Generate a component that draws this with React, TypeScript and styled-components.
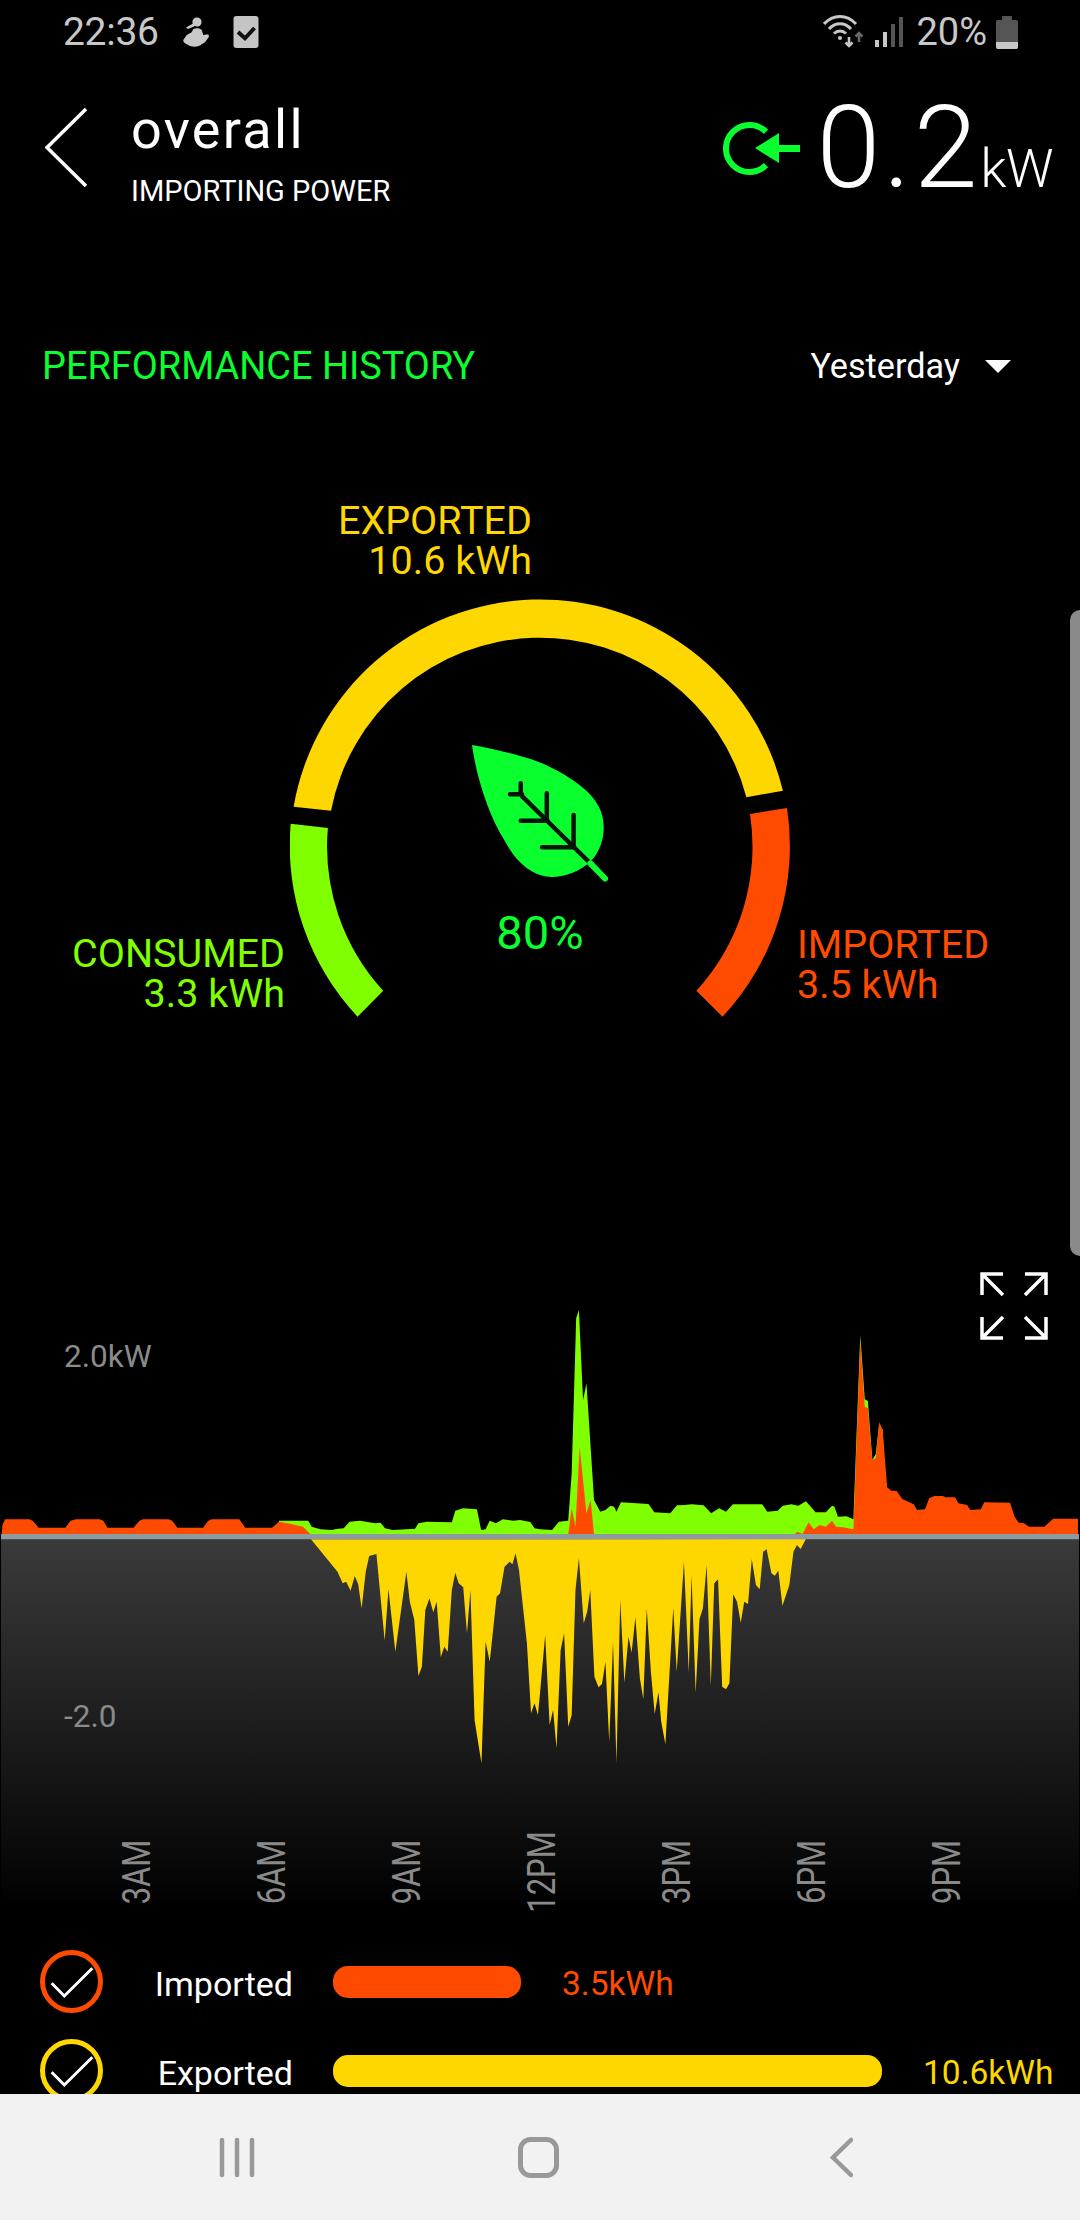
import styled, { createGlobalStyle } from "styled-components";

const Colors = {
  leaf: "#0aff2f",
  consumed: "#80ff00",
  imported: "#ff4b00",
  exported: "#ffd700",
  axis: "#8a8a8a",
  status: "#c8c8c8",
};

const GlobalStyle = createGlobalStyle`
  html, body {
    margin: 0;
    background: #000;
    font-family: Roboto, "Liberation Sans", sans-serif;
  }
`;

const Screen = styled.div`
  position: relative;
  width: 1080px;
  height: 2220px;
  background: #000;
  display: flex;
  flex-direction: column;
  overflow: hidden;
`;

const Main = styled.main`
  flex: 1;
  min-height: 0;
  overflow: hidden;
`;

const StatusBar = styled.div`
  height: 64px;
  padding: 0 62px 0 63px;
  display: flex;
  align-items: center;
  justify-content: space-between;
  color: ${Colors.status};
  box-sizing: border-box;
`;

const StatusGroup = styled.div`
  display: flex;
  align-items: center;
`;

const Clock = styled.span`
  font-size: 39px;
  letter-spacing: -0.3px;
  margin-right: 24px;
`;

const Percent = styled.span`
  font-size: 38px;
  margin: 0 9px 0 13px;
`;

const Header = styled.header`
  height: 140px;
  padding: 38px 27px 0 45px;
  box-sizing: border-box;
  display: flex;
  justify-content: space-between;
  align-items: flex-start;
  color: #fff;
`;

const TitleGroup = styled.div`
  display: flex;
  align-items: flex-start;
  gap: 44px;
`;

const BackIcon = styled.svg`
  margin-top: 6px;
`;

const TitleText = styled.div`
  display: flex;
  flex-direction: column;
`;

const Title = styled.h1`
  margin: -1px 0 0;
  font-size: 54px;
  line-height: 58px;
  font-weight: 400;
  letter-spacing: 2.3px;
`;

const Subtitle = styled.div`
  margin-top: 15px;
  font-size: 29px;
  line-height: 34px;
`;

const Reading = styled.div`
  display: flex;
  align-items: flex-start;
  margin-top: -12px;
`;

const ReadingIcon = styled.svg`
  margin: 32px 16px 0 0;
`;

const ReadingValue = styled.span`
  font-size: 115px;
  line-height: 115px;
  font-weight: 300;
  letter-spacing: 3px;
`;

const ReadingUnit = styled.span`
  font-size: 53px;
  font-weight: 300;
  line-height: 60px;
  letter-spacing: -0.5px;
  margin-top: 49px;
`;

const HistoryBar = styled.div`
  margin-top: 137px;
  height: 50px;
  padding: 0 69px 0 42px;
  display: flex;
  align-items: center;
  justify-content: space-between;
`;

const HistoryTitle = styled.h2`
  margin: 0;
  color: ${Colors.leaf};
  font-size: 37.9px;
  font-weight: 400;
`;

const RangeSelect = styled.div`
  display: flex;
  align-items: center;
  gap: 25px;
  color: #fff;
  font-size: 34.2px;
`;

const Caret = styled.i`
  width: 0;
  height: 0;
  border-left: 13px solid transparent;
  border-right: 13px solid transparent;
  border-top: 13px solid #fff;
`;

const GaugeGrid = styled.section`
  margin-top: 110px;
  display: grid;
  grid-template-columns: 290px 500px 290px;
  grid-template-rows: 96px 424px;
`;

const GaugeLabel = styled.div<{ $color: string; $align: "left" | "right" }>`
  color: ${(p) => p.$color};
  font-size: 39.5px;
  line-height: 39.5px;
  white-space: nowrap;
  text-align: ${(p) => p.$align};
`;

const ExportedLabel = styled(GaugeLabel)`
  grid-column: 2;
  grid-row: 1;
  width: 242px;
`;

const ConsumedLabel = styled(GaugeLabel)`
  grid-column: 1;
  grid-row: 2;
  margin-top: 337px;
  padding-right: 5px;
`;

const ImportedLabel = styled(GaugeLabel)`
  grid-column: 3;
  grid-row: 2;
  margin-top: 328px;
  padding-left: 7px;
`;

const GaugeDial = styled.div`
  grid-column: 2;
  grid-row: 2;
  position: relative;
`;

const DialSvg = styled.svg`
  display: block;
`;

const DialCenter = styled.div`
  position: absolute;
  left: 0;
  right: 0;
  top: 148px;
  display: flex;
  flex-direction: column;
  align-items: center;
`;

const Score = styled.div`
  margin-top: 23px;
  color: ${Colors.leaf};
  font-size: 47px;
  line-height: 54px;
`;

const Chart = styled.section`
  position: relative;
  margin-top: 251px;
  height: 665px;
`;

const PlotSvg = styled.svg`
  display: block;
`;

const YLabel = styled.span<{ $top: number }>`
  position: absolute;
  left: 64px;
  top: ${(p) => p.$top}px;
  color: ${Colors.axis};
  font-size: 31.5px;
  line-height: 30px;
`;

const ExpandIcon = styled.svg`
  position: absolute;
  top: 0;
  right: 32px;
`;

const TimeAxis = styled.div`
  position: absolute;
  left: 69px;
  top: 560px;
  display: grid;
  grid-template-columns: repeat(7, 135px);
  height: 80px;
`;

const TimeTick = styled.span`
  display: flex;
  align-items: center;
  justify-content: center;
  color: ${Colors.axis};
  font-size: 31px;
  white-space: nowrap;
  transform: rotate(-90deg) scaleY(1.25);
`;

const LegendRow = styled.div`
  height: 89px;
  padding-left: 40px;
  display: flex;
  align-items: center;
`;

const LegendLabel = styled.span`
  width: 190px;
  margin-right: 40px;
  padding-top: 4px;
  text-align: right;
  color: #fff;
  font-size: 34px;
`;

const LegendBar = styled.div<{ $color: string }>`
  height: 32px;
  border-radius: 15px;
  background: ${(p) => p.$color};
`;

const LegendValue = styled.span<{ $color: string }>`
  margin-left: 41px;
  padding-top: 4px;
  color: ${(p) => p.$color};
  font-size: 33.5px;
`;

const Scrollbar = styled.div`
  position: absolute;
  right: 0;
  top: 610px;
  width: 10px;
  height: 646px;
  background: #8a8a8a;
  border-radius: 10px 0 0 10px;
`;

const NavBar = styled.nav`
  height: 126px;
  flex-shrink: 0;
  background: #f2f2f2;
  display: flex;
  align-items: center;
  gap: 263px;
  padding-left: 219px;
`;

const NavBack = styled.svg`
  margin-left: 8px;
`;

type Pt = [number, number];

// traced in chart units: 2.904 per px across, 3 per px down, y=764 is the zero line
const greenTop: Pt[] = [
  [810, 764], [810, 722], [895, 722], [905, 740], [930, 748], [965, 750], [975, 747], [998, 745], [1015, 725], [1045, 722],
  [1090, 730], [1105, 728], [1118, 745], [1140, 750], [1205, 746], [1215, 730], [1240, 725], [1312, 727], [1322, 692],
  [1345, 685], [1385, 688], [1397, 750], [1410, 748], [1422, 722], [1440, 730], [1460, 718], [1490, 722], [1510, 720],
  [1540, 726], [1552, 745],
];

// right half of the day, y measured 60 units lower and x from mid screen
const greenTopRight: Pt[] = [
  [0, 808], [35, 810], [55, 785], [82, 782], [92, 640], [105, 175], [113, 150], [125, 420], [135, 370], [157, 720], [175, 755],
  [190, 750], [205, 737], [215, 740], [222, 755], [235, 727], [315, 732], [332, 757], [378, 760], [398, 736], [420, 735],
  [440, 733], [475, 736], [497, 760], [520, 745], [540, 755], [560, 733], [645, 733], [660, 755], [690, 752], [705, 737],
  [730, 733], [750, 737], [772, 724], [782, 735], [800, 757], [830, 757], [848, 737], [855, 740], [865, 770], [890, 769],
  [910, 778], [930, 225], [943, 418], [952, 423], [965, 600], [975, 582], [985, 490], [995, 510], [1010, 822],
];

const redLeft: Pt[] = [
  [5, 764], [7, 735], [15, 718], [85, 718], [95, 722], [112, 743], [190, 743], [205, 722], [220, 718], [290, 718], [300, 722],
  [312, 743], [388, 743], [405, 722], [415, 718], [490, 718], [500, 722], [515, 743], [590, 743], [605, 722], [615, 718],
  [695, 718], [712, 743], [790, 743], [810, 725], [835, 730], [880, 740], [903, 764],
];

const redSpike: Pt[] = [
  [82, 822], [92, 745], [103, 800], [115, 560], [135, 760], [147, 720], [157, 822],
];

const redRight: Pt[] = [
  [740, 822], [748, 815], [762, 822], [780, 787], [795, 808], [812, 795], [830, 800], [848, 782], [860, 800], [880, 802],
  [910, 808], [930, 240], [943, 440], [952, 445], [965, 600], [975, 595], [985, 487], [995, 510], [1008, 682], [1020, 692],
  [1035, 692], [1052, 717], [1085, 733], [1095, 750], [1118, 748], [1130, 715], [1145, 708], [1170, 708], [1178, 712],
  [1205, 712], [1215, 730], [1240, 735], [1250, 750], [1280, 748], [1290, 727], [1365, 728], [1378, 770], [1390, 788],
  [1405, 790], [1420, 800], [1465, 800], [1490, 776], [1562, 776], [1562, 822],
];

const yellowLeft: Pt[] = [
  [903, 778], [980, 875], [995, 910], [1005, 905], [1018, 932], [1030, 888], [1040, 912], [1050, 985], [1062, 875], [1072, 828],
  [1093, 822], [1117, 1082], [1128, 928], [1148, 1115], [1180, 875], [1190, 965], [1203, 1020], [1215, 1188], [1225, 1160],
  [1235, 990], [1247, 955], [1258, 997], [1268, 965], [1280, 1132], [1290, 1100], [1300, 1115], [1312, 930], [1322, 878],
  [1332, 910], [1345, 922], [1356, 1060], [1366, 930], [1378, 1320], [1398, 1450], [1410, 1085], [1422, 1145], [1442, 950],
  [1452, 940], [1465, 860], [1480, 845], [1488, 853], [1497, 820], [1507, 870], [1530, 1090], [1542, 1300], [1552, 1270],
  [1562, 1305],
];

const yellowRight: Pt[] = [
  [0, 1300], [15, 1125], [28, 1395], [38, 1350], [48, 1465], [60, 1170], [70, 1120], [82, 1400], [92, 1365], [103, 990], [113, 895],
  [127, 1090], [137, 1055], [146, 990], [158, 1250], [170, 1282], [180, 1272], [190, 1205], [201, 1447], [212, 1145], [222, 1510],
  [233, 1020], [245, 1268], [257, 1130], [266, 1178], [277, 1072], [290, 1255], [300, 1318], [310, 1045], [322, 1235], [333, 1362],
  [344, 1297], [352, 1385], [364, 1453], [387, 1043], [397, 1235], [418, 905], [432, 1238], [440, 945], [452, 1298], [463, 1078],
  [473, 1045], [484, 915], [496, 1278], [506, 970], [517, 958], [529, 1280], [540, 1288], [550, 1270], [561, 1003], [572, 1025],
  [583, 1088], [593, 1025], [604, 1032], [615, 897], [627, 975], [638, 988], [648, 875], [658, 868], [672, 940], [682, 947],
  [692, 932], [704, 1037], [724, 975], [736, 875], [746, 855], [757, 867], [772, 837],
];

const fromRight = (pts: Pt[]): Pt[] => pts.map(([x, y]) => [x + 1568, y - 60]);
const toPoints = (pts: Pt[]) => pts.map(([x, y]) => `${x},${y}`).join(" ");

const ticks = ["3AM", "6AM", "9AM", "12PM", "3PM", "6PM", "9PM"];

function WorkoutIcon() {
  return (
    <svg width="28" height="31" viewBox="0 0 28 31" fill={Colors.status}>
      <circle cx="14" cy="5" r="4.6" />
      <path d="M11 6 L3 10.5 L5 12 L11 9.5 Z" />
      <path d="M10.3 12 C13 10.5 17 11 18.7 13 L20.3 18 L25.3 17.3 L26 19.7 L22 25.3 L18.7 27.3 C16 30 9 30.5 5.3 28 C2.5 27 0 25 .3 23 L3.7 18 L8.7 15.3 Z" />
    </svg>
  );
}

function TaskIcon() {
  return (
    <svg width="26" height="32" viewBox="0 0 26 32" style={{ marginLeft: 22 }}>
      <rect x="0.5" width="25" height="32" rx="3" fill="#c4c4c4" />
      <path d="M5 16 L12 22.3 L21.5 12" fill="none" stroke="#111" strokeWidth="4" />
    </svg>
  );
}

function WifiIcon() {
  return (
    <svg width="44" height="34" viewBox="0 0 44 34" fill="none" stroke={Colors.status} strokeWidth="3">
      <path d="M1 9 C10 -1 24 -1 33 9" />
      <path d="M6 14 C12 7 22 7 28 14" />
      <path d="M11 18.5 C14.5 15 19.5 15 23 18.5" />
      <circle cx="17" cy="23" r="2" fill={Colors.status} stroke="none" />
      <path d="M26 22 V31 M22.5 27.5 L26 31 L29.5 27.5" strokeWidth="2.6" />
      <path d="M36 27 V18 M32.5 21.5 L36 18 L39.5 21.5" stroke="#666" strokeWidth="2.6" />
    </svg>
  );
}

function SignalIcon() {
  return (
    <svg width="28" height="30" viewBox="0 0 28 30" style={{ marginLeft: 8 }}>
      <rect x="0" y="23" width="4" height="7" fill={Colors.status} />
      <rect x="8" y="15" width="4" height="15" fill={Colors.status} />
      <rect x="16" y="7" width="4" height="23" fill="#555" />
      <rect x="24" y="0" width="4" height="30" fill="#555" />
    </svg>
  );
}

function BatteryIcon() {
  return (
    <svg width="22" height="33" viewBox="0 0 22 33">
      <rect x="6" width="10" height="6" rx="1" fill="#555" />
      <rect y="4" width="22" height="29" rx="2" fill="#555" />
      <path d="M0 26 H22 V31 a2 2 0 0 1 -2 2 H2 a2 2 0 0 1 -2 -2 Z" fill={Colors.status} />
    </svg>
  );
}

function LegendCheck({ color }: { color: string }) {
  return (
    <svg width="63" height="63" viewBox="0 0 63 63" fill="none">
      <circle cx="31.5" cy="31.5" r="29" stroke={color} strokeWidth="5" />
      <path d="M11.7 33.3 L24.3 46 L52.3 18.3" stroke="#fff" strokeWidth="3" />
    </svg>
  );
}

export default function App() {
  return (
    <Screen>
      <GlobalStyle />
      <Main>
        <StatusBar>
          <StatusGroup>
            <Clock>22:36</Clock>
            <WorkoutIcon />
            <TaskIcon />
          </StatusGroup>
          <StatusGroup>
            <WifiIcon />
            <SignalIcon />
            <Percent>20%</Percent>
            <BatteryIcon />
          </StatusGroup>
        </StatusBar>

        <Header>
          <TitleGroup>
            <BackIcon width="42" height="79" viewBox="0 0 42 79" fill="none" stroke="#fff" strokeWidth="3.5">
              <path d="M41 1 L2 39.5 L41 78" />
            </BackIcon>
            <TitleText>
              <Title>overall</Title>
              <Subtitle>IMPORTING POWER</Subtitle>
            </TitleText>
          </TitleGroup>
          <Reading>
            <ReadingIcon width="77" height="53" viewBox="0 0 77 53" fill={Colors.leaf}>
              <path d="M43 9.8 A23.5 23.5 0 1 0 43 43.2" fill="none" stroke={Colors.leaf} strokeWidth="6" />
              <path d="M32 26 L56 11 V23 H77 V30 H56 V41 Z" />
            </ReadingIcon>
            <ReadingValue>0.2</ReadingValue>
            <ReadingUnit>kW</ReadingUnit>
          </Reading>
        </Header>

        <HistoryBar>
          <HistoryTitle>PERFORMANCE HISTORY</HistoryTitle>
          <RangeSelect>
            Yesterday
            <Caret />
          </RangeSelect>
        </HistoryBar>

        <GaugeGrid>
          <ExportedLabel $color={Colors.exported} $align="right">
            EXPORTED
            <br />
            10.6 kWh
          </ExportedLabel>
          <ConsumedLabel $color={Colors.consumed} $align="right">
            CONSUMED
            <br />
            3.3 kWh
          </ConsumedLabel>
          <GaugeDial>
            <DialSvg width="500" height="424" viewBox="290 597 500 424">
              <path
                d="M293.6 806.7 A250 250 0 0 1 782.9 790.7 L746.4 797.3 A213 213 0 0 0 331 810.7 Z"
                fill={Colors.exported}
              />
              <path
                d="M290.7 823.7 A250 250 0 0 0 357.5 1016.7 L383.2 990.7 A213 213 0 0 1 327.9 828 Z"
                fill={Colors.consumed}
              />
              <path
                d="M787 808 A250 250 0 0 1 722.5 1016.7 L696.4 990.7 A213 213 0 0 0 750 814 Z"
                fill={Colors.imported}
              />
            </DialSvg>
            <DialCenter>
              <svg width="136" height="138" viewBox="0 0 136 138">
                <path
                  d="M0 0 C28 5 60 13 74 20 C95 30 118 44 127 62 C135 78 133 100 120 115 C108 127 92 132 80 132 C60 131 45 118 34 98 C16 70 4 30 0 0 Z"
                  fill={Colors.leaf}
                />
                <g fill="none" stroke="#04130a" strokeWidth="4.5" strokeLinecap="round">
                  <path d="M50.5 51.7 L118 118" />
                  <path d="M48.7 38.3 V49 L50.5 51.7 M38 49.3 H50" />
                  <path d="M74.8 48.3 V74" />
                  <path d="M48.7 75.7 H75.5" />
                  <path d="M101.6 70 V100" />
                  <path d="M70.1 102.3 H102.3" />
                </g>
                <path d="M118.4 118.4 L133 133.5" stroke={Colors.leaf} strokeWidth="6" strokeLinecap="round" />
              </svg>
              <Score>80%</Score>
            </DialCenter>
          </GaugeDial>
          <ImportedLabel $color={Colors.imported} $align="left">
            IMPORTED
            <br />
            3.5 kWh
          </ImportedLabel>
        </GaugeGrid>

        <Chart>
          <PlotSvg width="1080" height="638" viewBox="0 -24 3136 1914" preserveAspectRatio="none">
            <defs>
              <linearGradient id="floor" x1="0" y1="0" x2="0" y2="1">
                <stop offset="0" stopColor="#3a3a3a" />
                <stop offset="1" stopColor="#000" />
              </linearGradient>
            </defs>
            <rect x="3" y="778" width="3130" height="1112" fill="url(#floor)" />
            <polygon
              points={toPoints([...greenTop, ...fromRight(greenTopRight)])}
              fill={Colors.consumed}
            />
            <polygon points={toPoints(redLeft)} fill={Colors.imported} />
            <polygon points={toPoints(fromRight(redSpike))} fill={Colors.imported} />
            <polygon points={toPoints(fromRight(redRight))} fill={Colors.imported} />
            <polygon
              points={toPoints([...yellowLeft, ...fromRight(yellowRight)])}
              fill={Colors.exported}
            />
            <rect x="3" y="762" width="3130" height="16" fill="#8c9ba0" />
          </PlotSvg>
          <YLabel $top={70}>2.0kW</YLabel>
          <YLabel $top={430}>-2.0</YLabel>
          <ExpandIcon width="68" height="68" viewBox="0 0 68 68" fill="none" stroke="#fff" strokeWidth="3.5">
            <path d="M23 2 H2 V23 M2 2 L23 23" />
            <path d="M45 2 H66 V23 M66 2 L45 23" />
            <path d="M2 45 V66 H23 M2 66 L23 45" />
            <path d="M66 45 V66 H45 M66 66 L45 45" />
          </ExpandIcon>
          <TimeAxis>
            {ticks.map((t) => (
              <TimeTick key={t}>{t}</TimeTick>
            ))}
          </TimeAxis>
        </Chart>

        <LegendRow>
          <LegendCheck color={Colors.imported} />
          <LegendLabel>Imported</LegendLabel>
          <LegendBar $color={Colors.imported} style={{ width: 188 }} />
          <LegendValue $color={Colors.imported}>3.5kWh</LegendValue>
        </LegendRow>
        <LegendRow>
          <LegendCheck color={Colors.exported} />
          <LegendLabel>Exported</LegendLabel>
          <LegendBar $color={Colors.exported} style={{ width: 549 }} />
          <LegendValue $color={Colors.exported}>10.6kWh</LegendValue>
        </LegendRow>
      </Main>

      <NavBar>
        <svg width="36" height="41" viewBox="0 0 36 41" stroke="#999" strokeWidth="4.5" strokeLinecap="round">
          <path d="M3 3 V38 M18 3 V38 M33 3 V38" />
        </svg>
        <svg width="41" height="41" viewBox="0 0 41 41" fill="none" stroke="#999" strokeWidth="5">
          <rect x="2.5" y="2.5" width="36" height="36" rx="10" />
        </svg>
        <NavBack width="23" height="41" viewBox="0 0 23 41" fill="none" stroke="#999" strokeWidth="4.5" strokeLinecap="round">
          <path d="M21 3 L3 20.5 L21 38" />
        </NavBack>
      </NavBar>
      <Scrollbar />
    </Screen>
  );
}
